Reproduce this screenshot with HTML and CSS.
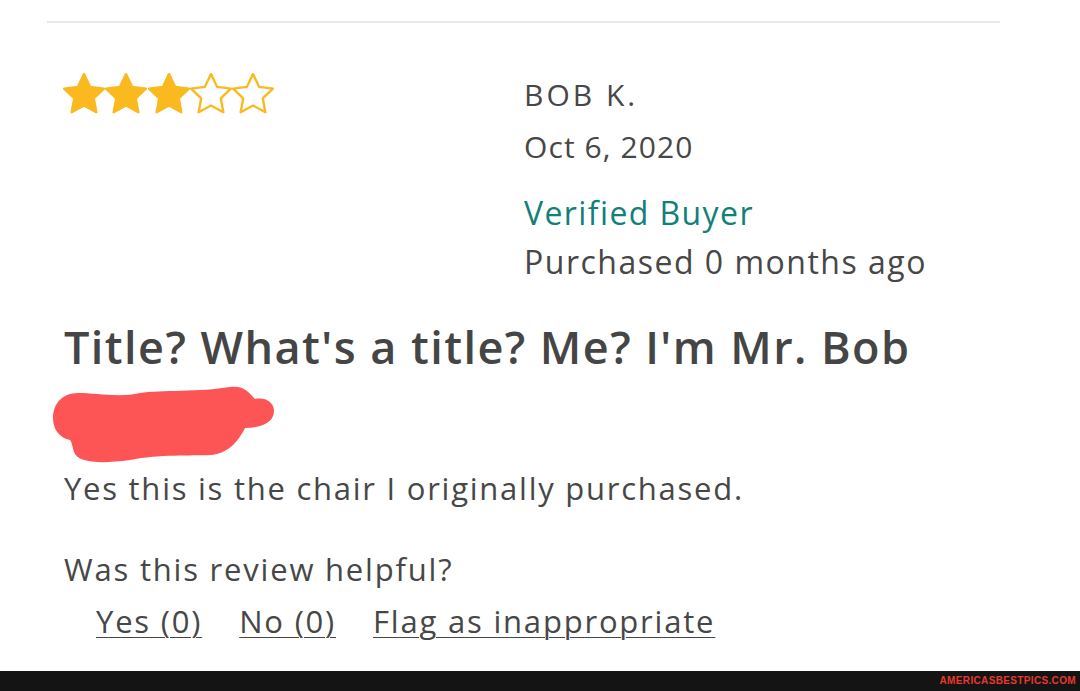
FILE: index.html
```html
<!DOCTYPE html>
<html lang="en">
<head>
<meta charset="utf-8">
<title>Review</title>
<link rel="stylesheet" href="styles.css">
</head>
<body>
<main class="page">
  <hr class="rule">
  <section class="review-head">
    <div class="stars" aria-label="3 out of 5 stars">
      <svg class="star full" viewBox="2.3 2.1 19.4 19.4"><path d="M12 2.6l2.8 5.9 6.4.8-4.7 4.5 1.2 6.4L12 17.1l-5.7 3.1 1.2-6.4-4.7-4.5 6.4-.8z"/></svg>
      <svg class="star full" viewBox="2.3 2.1 19.4 19.4"><path d="M12 2.6l2.8 5.9 6.4.8-4.7 4.5 1.2 6.4L12 17.1l-5.7 3.1 1.2-6.4-4.7-4.5 6.4-.8z"/></svg>
      <svg class="star full" viewBox="2.3 2.1 19.4 19.4"><path d="M12 2.6l2.8 5.9 6.4.8-4.7 4.5 1.2 6.4L12 17.1l-5.7 3.1 1.2-6.4-4.7-4.5 6.4-.8z"/></svg>
      <svg class="star empty" viewBox="2.3 2.1 19.4 19.4"><path d="M12 2.6l2.8 5.9 6.4.8-4.7 4.5 1.2 6.4L12 17.1l-5.7 3.1 1.2-6.4-4.7-4.5 6.4-.8z"/></svg>
      <svg class="star empty" viewBox="2.3 2.1 19.4 19.4"><path d="M12 2.6l2.8 5.9 6.4.8-4.7 4.5 1.2 6.4L12 17.1l-5.7 3.1 1.2-6.4-4.7-4.5 6.4-.8z"/></svg>
    </div>
    <div class="reviewer">
      <div class="name">BOB K.</div>
      <div class="date">Oct 6, 2020</div>
      <div class="verified">Verified Buyer</div>
      <div class="purchased">Purchased 0 months ago</div>
    </div>
  </section>
  <h2 class="title">Title? What's a title? Me? I'm Mr. Bob</h2>
  <svg class="redact" viewBox="0 0 230 82" width="230" height="82" aria-hidden="true">
    <path d="M3,34 C3,20 12,9 28,9 C45,9 70,14 90,9 C110,6 150,8 180,3 C195,1 200,10 205,15 C215,13 224,18 224,27 C224,38 212,44 195,44 C190,54 180,70 160,71 C140,72 110,70 80,76 C50,80 28,79 24,68 C22,62 22,58 20,56 C10,54 3,46 3,34 Z"/>
  </svg>
  <p class="body-text">Yes this is the chair I originally purchased.</p>
  <p class="helpful">Was this review helpful?</p>
  <nav class="actions">
    <a href="#">Yes (0)</a>
    <a href="#">No (0)</a>
    <a href="#">Flag as inappropriate</a>
  </nav>
</main>
<footer class="credit">AMERICASBESTPICS.COM</footer>
</body>
</html>
```
FILE: styles.css
```css
html, body {
  margin: 0;
  padding: 0;
  background: #ffffff;
}

body {
  min-height: 100vh;
  display: flex;
  flex-direction: column;
  font-family: "Open Sans", "Noto Sans", sans-serif;
  color: #474747;
}

.page {
  flex: 1;
  display: flex;
  flex-direction: column;
  padding-top: 21px;
}

.rule {
  margin: 0 0 0 47px;
  width: 953px;
  height: 0;
  border: 0;
  border-top: 2px solid #e8e8e8;
}

.review-head {
  display: flex;
  align-items: flex-start;
  margin-top: 47px;
  padding-left: 63px;
}

.stars {
  display: flex;
  width: 461px;
  margin-top: 3px;
}

.star {
  width: 42px;
  height: 42px;
  display: block;
  margin-right: 0.3px;
}

.star path {
  stroke: #fbb920;
  stroke-width: 1.1;
  stroke-linejoin: round;
}

.star.full path {
  fill: #fbb920;
}

.star.empty path {
  fill: none;
}

.reviewer {
  padding-top: 5px;
}

.name, .date {
  font-size: 30px;
  line-height: 40px;
}

.name {
  letter-spacing: 3px;
}

.date {
  margin-top: 12px;
  letter-spacing: 1.1px;
}

.verified, .purchased {
  font-size: 32px;
  line-height: 42px;
}

.verified {
  margin-top: 25px;
  color: #11807a;
  letter-spacing: 1.4px;
}

.purchased {
  margin-top: 7px;
  letter-spacing: 1.5px;
}

.title {
  margin: 36px 0 0 64px;
  font-size: 45px;
  line-height: 56px;
  font-weight: 600;
  color: #454545;
  letter-spacing: 1.45px;
}

.redact {
  display: block;
  margin: 9px 0 0 50px;
}

.redact path {
  fill: #fd5555;
}

.body-text, .helpful {
  margin: 0 0 0 64px;
  font-size: 31px;
  line-height: 40px;
  letter-spacing: 1.75px;
}

.body-text {
  margin-top: 2px;
}

.helpful {
  margin-top: 41px;
  letter-spacing: 1.8px;
}

.actions {
  display: flex;
  gap: 37px;
  margin: 12px 0 0 96px;
  font-size: 31px;
  line-height: 40px;
}

.actions a {
  color: #474747;
  letter-spacing: 1.8px;
  text-decoration: underline;
  text-decoration-thickness: 1px;
  text-underline-offset: 4px;
}

.credit {
  height: 20px;
  background: #141414;
  color: #e8392c;
  font-family: "Liberation Sans", Arial, sans-serif;
  font-weight: 700;
  font-size: 10px;
  line-height: 20px;
  letter-spacing: 0.35px;
  text-align: right;
  padding-right: 4px;
}
```
